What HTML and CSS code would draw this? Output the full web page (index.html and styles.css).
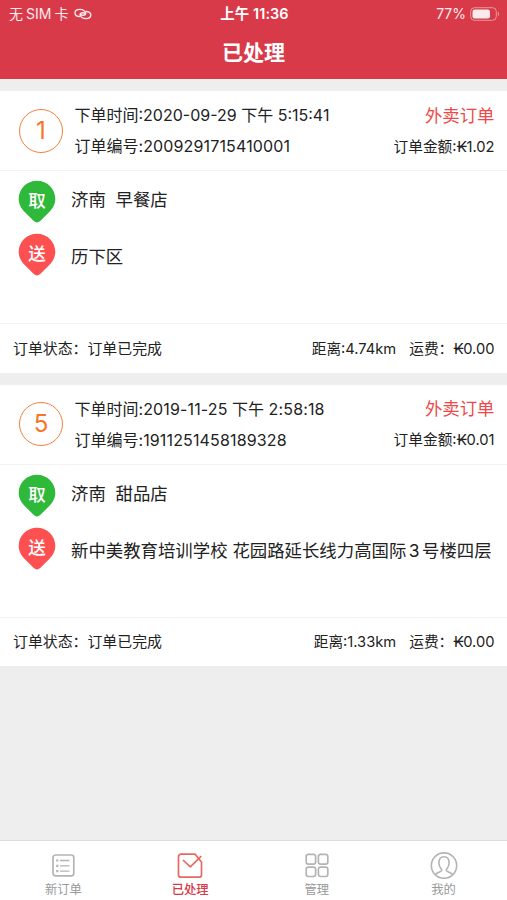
FILE: index.html
```html
<!DOCTYPE html>
<html lang="zh-CN">
<head>
    <meta charset="UTF-8">
    <meta name="viewport" content="width=device-width, initial-scale=1.0">
    <title>已处理</title>
    <link rel="stylesheet" href="styles.css">
</head>
<body>
    <header class="header">
        <div class="status-bar">
            <div class="status-left">
                <span>无<span class="sim">SIM</span>卡</span>
                <svg class="link-icon" width="18" height="12" viewBox="0 0 18 12" fill="none" stroke="currentColor" stroke-width="1.4">
                    <path d="M6 8.500C3 8.400 1 6.900 1 4.900s2-3.500 4.900-3.500c2.800 0 5.800 1.700 5.800 3.900 0 1.300-1.300 2-2.700 2-1.100 0-2-.4-2.600-1"/>
                    <path d="M11.800 3.500c3 .1 5 1.600 5 3.600s-2 3.500-4.900 3.500c-2.800 0-5.800-1.700-5.800-3.900 0-1.300 1.300-2 2.700-2 1.100 0 2 .4 2.600 1"/>
                </svg>
            </div>
            <div class="status-time">上午 11:36</div>
            <div class="status-right">
                <span>77%</span>
                <svg width="30" height="14" viewBox="0 0 30 14">
                    <rect x="0.700" y="0.700" width="25.600" height="12.600" rx="3.800" fill="none" stroke="#fff" stroke-opacity="0.500"/>
                    <rect x="2.500" y="2.500" width="17.500" height="9" rx="2.200" fill="#fff"/>
                    <path d="M27.800 4.800c1.700.600 1.700 3.800 0 4.400z" fill="#fff" fill-opacity="0.500"/>
                </svg>
            </div>
        </div>
        <h1 class="title">已处理</h1>
    </header>

    <main class="order-list">
        <section class="order">
            <div class="order-head">
                <div class="order-index">1</div>
                <div class="order-lines">
                    <div class="order-line">
                        <span class="order-time">下单时间:2020-09-29 下午 5:15:41</span>
                        <span class="order-type">外卖订单</span>
                    </div>
                    <div class="order-line">
                        <span class="order-number">订单编号:<span class="digits">2009291715410001</span></span>
                        <span class="order-amount">订单金额:<span class="kip">₭</span>1.02</span>
                    </div>
                </div>
            </div>
            <div class="order-body">
                <div class="place">
                    <div class="pin pin-pick">
                        <svg width="38" height="43" viewBox="0 0 38 43"><path d="M19 .7C8.800.7.700 8.700.700 18.800c0 5.700 2.600 9.900 6.500 13.700l8.600 8.500c2 1.900 4.400 1.900 6.400 0l8.600-8.500c3.900-3.800 6.500-8 6.500-13.700C37.300 8.700 29.200.7 19 .7z"/></svg>
                        <span>取</span>
                    </div>
                    <p class="place-name">济南&nbsp; 早餐店</p>
                </div>
                <div class="place place-send">
                    <div class="pin pin-send">
                        <svg width="38" height="43" viewBox="0 0 38 43"><path d="M19 .7C8.800.7.700 8.700.700 18.800c0 5.700 2.600 9.900 6.500 13.700l8.600 8.500c2 1.900 4.400 1.900 6.400 0l8.600-8.500c3.900-3.800 6.500-8 6.500-13.700C37.300 8.700 29.200.7 19 .7z"/></svg>
                        <span>送</span>
                    </div>
                    <p class="place-name">历下区</p>
                </div>
            </div>
            <div class="order-foot">
                <span class="order-status">订单状态：订单已完成</span>
                <span class="order-distance">距离:4.74km</span>
                <span class="order-fee">运费：<span class="kip">₭</span>0.00</span>
            </div>
        </section>

        <section class="order">
            <div class="order-head">
                <div class="order-index">5</div>
                <div class="order-lines">
                    <div class="order-line">
                        <span class="order-time">下单时间:<span class="digits">2019-11-25</span> 下午 <span class="digits">2:58:18</span></span>
                        <span class="order-type">外卖订单</span>
                    </div>
                    <div class="order-line">
                        <span class="order-number">订单编号:<span class="digits">1911251458189328</span></span>
                        <span class="order-amount">订单金额:<span class="kip">₭</span>0.01</span>
                    </div>
                </div>
            </div>
            <div class="order-body">
                <div class="place">
                    <div class="pin pin-pick">
                        <svg width="38" height="43" viewBox="0 0 38 43"><path d="M19 .7C8.800.7.700 8.700.700 18.800c0 5.700 2.600 9.900 6.500 13.700l8.600 8.500c2 1.900 4.400 1.900 6.400 0l8.600-8.500c3.900-3.800 6.500-8 6.500-13.700C37.300 8.700 29.200.7 19 .7z"/></svg>
                        <span>取</span>
                    </div>
                    <p class="place-name">济南&nbsp; 甜品店</p>
                </div>
                <div class="place place-send">
                    <div class="pin pin-send">
                        <svg width="38" height="43" viewBox="0 0 38 43"><path d="M19 .7C8.800.7.700 8.700.700 18.800c0 5.700 2.600 9.900 6.500 13.700l8.600 8.500c2 1.900 4.400 1.900 6.400 0l8.600-8.500c3.900-3.800 6.500-8 6.500-13.700C37.300 8.700 29.200.7 19 .7z"/></svg>
                        <span>送</span>
                    </div>
                    <p class="place-name">新中美教育培训学校 花园路延长线力高国际<span class="building">3</span>号楼四层</p>
                </div>
            </div>
            <div class="order-foot">
                <span class="order-status">订单状态：订单已完成</span>
                <span class="order-distance">距离:1.33km</span>
                <span class="order-fee">运费：<span class="kip">₭</span>0.00</span>
            </div>
        </section>
    </main>

    <nav class="tab-bar">
        <a class="tab">
            <svg width="28" height="28" viewBox="0 0 28 28" fill="none" stroke="currentColor" stroke-width="1.700">
                <rect x="4" y="4" width="20.800" height="20.800" rx="2.500"/>
                <path d="M11 9.500h9.500M11 14.800h9.500M11 20.100h9.500" stroke-width="1.300"/>
                <path d="M7.200 9.500h2.200M7.200 14.800h2.200M7.200 20.100h2.200" stroke-width="2.200"/>
            </svg>
            <span>新订单</span>
        </a>
        <a class="tab tab-active">
            <svg width="28" height="28" viewBox="0 0 28 28" fill="none" stroke="currentColor" stroke-width="1.700">
                <path d="M19 3.200H5c-1.500 0-2.500 1-2.500 2.500v18c0 1.500 1 2.500 2.500 2.500h18c1.500 0 2.500-1 2.500-2.500V11L19 3.200z"/>
                <path d="M7 9l7.300 6.800L25.300 5.200"/>
            </svg>
            <span>已处理</span>
        </a>
        <a class="tab">
            <svg width="28" height="28" viewBox="0 0 28 28" fill="none" stroke="currentColor" stroke-width="1.700">
                <rect x="3.200" y="3.300" width="9.400" height="9.800" rx="2.200"/>
                <rect x="15.400" y="3.300" width="9.400" height="9.800" rx="2.200"/>
                <rect x="3.200" y="16.100" width="9.400" height="9.400" rx="2.200"/>
                <rect x="15.400" y="16.100" width="9.400" height="9.400" rx="2.200"/>
            </svg>
            <span>管理</span>
        </a>
        <a class="tab">
            <svg width="28" height="28" viewBox="0 0 28 28" fill="none" stroke="currentColor" stroke-width="1.600">
                <circle cx="14" cy="14.600" r="12.700"/>
                <path d="M5.500 23.500c1.500-2.300 5.800-2.300 6.300-4.300.2-1-2.900-2.700-2.900-7.200 0-4 2.200-6.200 5.100-6.200s5.100 2.200 5.100 6.200c0 4.500-3.100 6.200-2.900 7.200.5 2 4.800 2 6.300 4.300"/>
            </svg>
            <span>我的</span>
        </a>
    </nav>
</body>
</html>
```
FILE: styles.css
```css
* {
    box-sizing: border-box;
}

body {
    display: flex;
    flex-direction: column;
    height: 100vh;
    margin: 0;
    font-family: Inter, "Noto Sans CJK SC", sans-serif;
    font-size: 15px;
    background-color: #eeeeee;
    color: #222;
    overflow: hidden;
}

.header {
    height: 79px;
    background-color: #d93a49;
    color: #fff;
    flex-shrink: 0;
}

.status-bar {
    display: grid;
    grid-template-columns: 1fr auto 1fr;
    align-items: center;
    height: 28px;
    padding: 0 7px 0 9px;
    font-size: 14px;
    line-height: 28px;
}

.status-left,
.status-right {
    display: flex;
    align-items: center;
    gap: 6px;
    opacity: 0.9;
}

.status-right {
    justify-content: flex-end;
    gap: 4px;
}

.sim {
    margin: 0 3px;
}

.status-time {
    font-size: 14.4px;
    font-weight: 600;
    letter-spacing: 0.1px;
}

.title {
    margin: 0;
    font-size: 21px;
    font-weight: 700;
    line-height: 49px;
    text-align: center;
}

.order-list {
    display: flex;
    flex-direction: column;
    gap: 12px;
    flex: 1;
    padding-top: 12px;
}

.order {
    height: 281.5px;
    background-color: #fff;
}

.order-head {
    display: flex;
    align-items: center;
    gap: 11.5px;
    height: 80px;
    padding: 0 12.5px 2px 19px;
    border-bottom: 1px solid #f3f3f3;
}

.order-index {
    width: 44px;
    height: 44px;
    margin-top: 2px;
    border: 1.5px solid #f5813c;
    border-radius: 50%;
    color: #f5762a;
    font-size: 24px;
    line-height: 42px;
    text-align: center;
}

.order-lines {
    flex: 1;
}

.order-line {
    display: flex;
    justify-content: space-between;
    align-items: center;
    height: 31px;
    white-space: nowrap;
}

.order-time,
.order-number {
    font-size: 16px;
}

.digits {
    letter-spacing: 0.15px;
}

.order-type {
    color: #f04848;
    font-size: 17.4px;
}

.order-amount {
    font-size: 14.7px;
}

.kip {
    margin-right: -0.5px;
}

.order-body {
    height: 152px;
    padding: 9px 12px 0 18px;
}

.place {
    display: flex;
    height: 53px;
    gap: 15px;
}

.pin {
    position: relative;
    width: 38px;
    height: 43px;
    flex-shrink: 0;
}

.pin svg {
    display: block;
}

.pin span {
    position: absolute;
    top: 0;
    left: 0;
    width: 100%;
    color: #fff;
    font-size: 17.5px;
    font-weight: 500;
    line-height: 41px;
    text-align: center;
}

.pin-pick {
    fill: #2fb93a;
}

.pin-send {
    fill: #fd5050;
}

.place-name {
    margin: 0;
    font-size: 17.4px;
    line-height: 40px;
    white-space: nowrap;
}

.place-send .place-name {
    padding-top: 4px;
}

.building {
    margin: 0 2.5px;
}

.order-foot {
    display: flex;
    align-items: center;
    height: 49.5px;
    padding: 0 12.5px 2px 13px;
    border-top: 1px solid #f3f3f3;
    font-size: 14.9px;
    white-space: nowrap;
}

.order-distance {
    margin-left: auto;
    margin-right: 13px;
    font-size: 14.7px;
}

.order-fee {
    font-size: 14.7px;
}

.tab-bar {
    display: flex;
    height: 60px;
    flex-shrink: 0;
    border-top: 1px solid #dcdcdc;
    background-color: #fff;
}

.tab {
    display: flex;
    flex-direction: column;
    align-items: center;
    flex: 1;
    padding-top: 10px;
    color: #b4b4b4;
    font-size: 12.3px;
    line-height: 22px;
}

.tab svg {
    flex-shrink: 0;
}

.tab span {
    color: #999;
}

.tab-active {
    color: #e66a62;
}

.tab-active span {
    color: #d93a49;
    font-weight: 500;
}
```
